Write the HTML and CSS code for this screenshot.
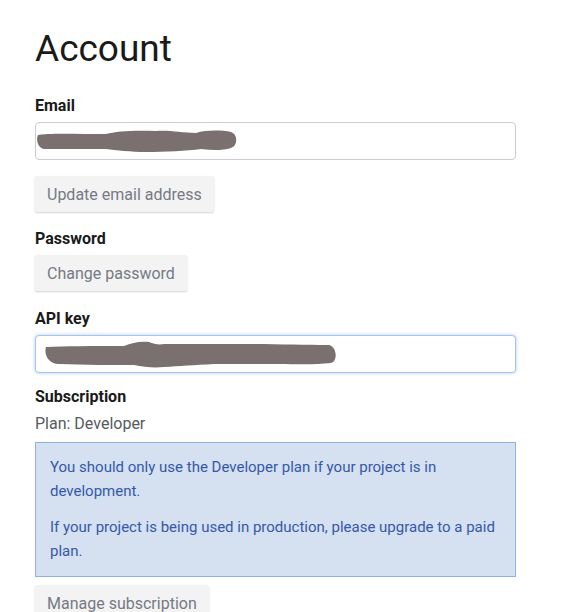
FILE: index.html
```html
<!DOCTYPE html>
<html lang="en">
<head>
<meta charset="utf-8">
<title>Account</title>
<link rel="stylesheet" href="styles.css">
</head>
<body>
<main class="page">
  <h1 class="title">Account</h1>

  <section class="field">
    <label class="label">Email</label>
    <div class="input">
      <svg class="redact" width="205" height="24" viewBox="0 0 205 24">
        <path d="M2 6 C10 4 40 5 70 5 C80 2 100 1 120 2 C135 1 145 4 160 4 C170 1 185 1 195 3 C202 5 202 17 195 19 C185 22 175 21 165 20 C150 22 130 23 110 23 C95 23 80 21 70 20 C50 20 25 20 8 20 C1 19 0 9 2 6 Z" fill="#7a706f"/>
      </svg>
    </div>
    <button class="btn">Update email address</button>
  </section>

  <section class="field field-pw">
    <label class="label">Password</label>
    <button class="btn btn-tight">Change password</button>
  </section>

  <section class="field field-api">
    <label class="label">API key</label>
    <div class="input input-focus">
      <svg class="redact redact-api" width="295" height="30" viewBox="0 0 295 30">
        <path d="M2 8 C20 7 50 7 80 7 C88 4 95 2 105 3 C110 5 115 6 120 5 C140 5 170 5 200 5 C230 5 260 6 285 6 C293 8 294 22 287 24 C270 26 250 25 235 25 C210 25 190 25 170 25 C150 26 135 27 120 28 C110 29 100 28 90 26 C70 26 40 26 15 25 C3 25 0 14 2 8 Z" fill="#7a706f"/>
      </svg>
    </div>
  </section>

  <section class="field">
    <label class="label">Subscription</label>
    <p class="plan">Plan: Developer</p>
    <div class="alert">
      <p>You should only use the Developer plan if your project is in development.</p>
      <p>If your project is being used in production, please upgrade to a paid plan.</p>
    </div>
    <button class="btn">Manage subscription</button>
  </section>
</main>
</body>
</html>
```

FILE: styles.css
```css
html, body {
  margin: 0;
  padding: 0;
  background: #ffffff;
}

body {
  font-family: Roboto, "Liberation Sans", sans-serif;
  color: #1f1f1f;
}

.page {
  padding: 24px 0 0 35px;
  width: 481px;
  display: flex;
  flex-direction: column;
}

.title {
  margin: 0 0 22px 0;
  font-size: 37px;
  font-weight: 400;
  line-height: 50px;
  color: #1a1a1a;
}

.field {
  display: flex;
  flex-direction: column;
  align-items: flex-start;
  margin-bottom: 17px;
}

.field-pw {
  margin-bottom: 18px;
}

.field-api {
  margin-bottom: 14px;
}

.label {
  font-size: 16px;
  font-weight: 700;
  line-height: 20px;
  color: #1a1a1a;
  margin-bottom: 6px;
}

.input {
  box-sizing: border-box;
  width: 481px;
  height: 38px;
  border: 1px solid #cccccc;
  border-radius: 4px;
  background: #fff;
  display: flex;
  align-items: center;
  padding-left: 0;
}

.input-focus {
  border-color: #a9c3ee;
  box-shadow: 0 0 3px 1px rgba(120, 160, 230, 0.35);
}

.redact-api {
  margin-left: 8px;
}

.btn {
  margin-top: 16px;
  height: 36px;
  padding: 0 12px;
  border: none;
  border-radius: 2px;
  background: #f3f3f3;
  box-shadow: 0 1px 2px rgba(0, 0, 0, 0.18);
  font-family: Roboto, "Liberation Sans", sans-serif;
  font-size: 16px;
  color: #757a84;
}

.btn-tight {
  margin-top: 0;
}

.plan {
  margin: 0 0 7px 0;
  font-size: 16px;
  line-height: 22px;
  color: #555a60;
}

.alert {
  box-sizing: border-box;
  width: 481px;
  background: #d5e0f1;
  border: 1px solid #8fb0e2;
  padding: 12px 14px 13px;
  color: #3459a8;
  font-size: 15px;
  line-height: 24px;
}

.alert p {
  margin: 0;
}

.alert p + p {
  margin-top: 12px;
}

.alert + .btn {
  margin-top: 8px;
}
```
